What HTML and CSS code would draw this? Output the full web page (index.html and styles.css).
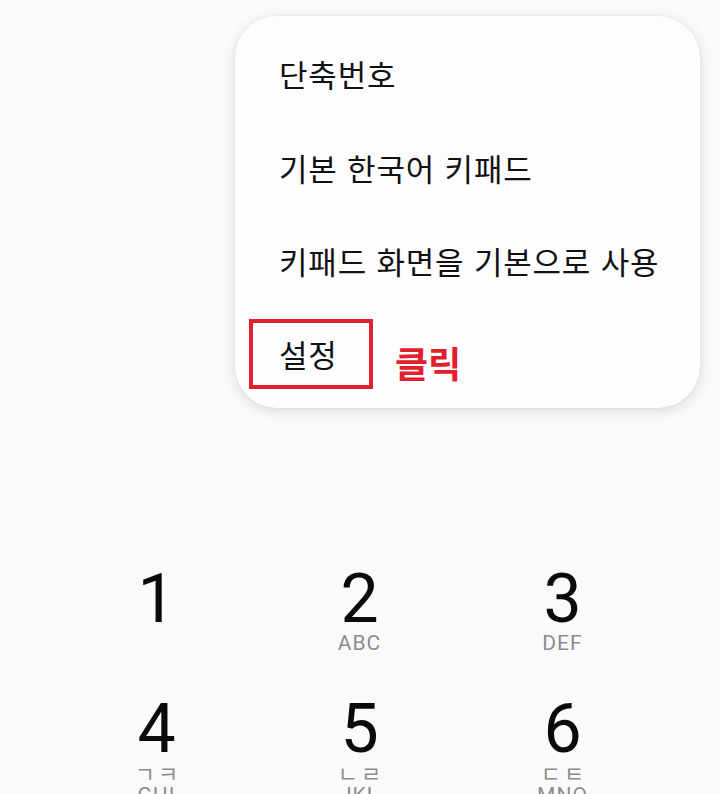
FILE: index.html
```html
<!DOCTYPE html>
<html lang="ko">
<head>
<meta charset="utf-8">
<link rel="stylesheet" href="styles.css">
</head>
<body>
<div class="screen">
  <div class="menu">
    <div class="item">단축번호</div>
    <div class="item">기본 한국어 키패드</div>
    <div class="item">키패드 화면을 기본으로 사용</div>
    <div class="item last">
      <span class="mark">설정</span>
      <span class="click">클릭</span>
    </div>
  </div>
  <div class="keypad">
    <div class="key"><span class="digit">1</span><span class="sub">&nbsp;</span></div>
    <div class="key"><span class="digit">2</span><span class="sub">ABC</span></div>
    <div class="key"><span class="digit">3</span><span class="sub">DEF</span></div>
    <div class="key"><span class="digit">4</span><span class="ko">ㄱㅋ</span><span class="sub">GHI</span></div>
    <div class="key"><span class="digit">5</span><span class="ko">ㄴㄹ</span><span class="sub">JKL</span></div>
    <div class="key"><span class="digit">6</span><span class="ko">ㄷㅌ</span><span class="sub">MNO</span></div>
  </div>
</div>
</body>
</html>
```
FILE: styles.css
```css
html, body {
  margin: 0;
  padding: 0;
  background: #fafafc;
  overflow: hidden;
}
.screen {
  width: 720px;
  height: 794px;
  overflow: hidden;
  display: flex;
  flex-direction: column;
  font-family: "Noto Sans CJK KR", "Noto Sans", sans-serif;
}
.menu {
  flex-shrink: 0;
  margin: 16px 0 0 235px;
  width: 465px;
  height: 392px;
  box-sizing: border-box;
  background: #fdfdff;
  border-radius: 42px;
  box-shadow: 0 3px 14px rgba(0, 0, 0, 0.13), 0 0 3px rgba(0, 0, 0, 0.06);
  padding: 11px 0 0 44px;
  display: flex;
  flex-direction: column;
}
.item {
  height: 93.5px;
  display: flex;
  align-items: center;
  font-size: 31px;
  color: #111;
  letter-spacing: 0.8px;
}
.item.last {
  margin-left: -30px;
}
.mark {
  box-sizing: border-box;
  width: 124px;
  height: 70px;
  border: 4px solid #e21f2b;
  padding-left: 26px;
  padding-bottom: 2px;
  display: flex;
  align-items: center;
}
.click {
  margin-left: 22px;
  margin-top: 15px;
  font-size: 36px;
  font-weight: 700;
  letter-spacing: 0;
  color: #e21f2b;
}
.keypad {
  flex-shrink: 0;
  margin: 159px 0 0 55px;
  width: 609px;
  display: grid;
  grid-template-columns: repeat(3, 1fr);
}
.key {
  height: 130px;
  display: flex;
  flex-direction: column;
  align-items: center;
  font-family: Roboto, "Noto Sans", sans-serif;
}
.digit {
  font-size: 68px;
  line-height: 65px;
  color: #0a0a0a;
  font-weight: 400;
}
.sub {
  font-size: 21px;
  line-height: 22px;
  color: #8c8c8c;
  letter-spacing: 1px;
}
.ko {
  font-family: "Noto Sans CJK KR", sans-serif;
  font-size: 22px;
  line-height: 20px;
  color: #8c8c8c;
  letter-spacing: 3px;
  margin-right: -3px;
}
.ko + .sub {
  margin-top: 2px;
}
```
